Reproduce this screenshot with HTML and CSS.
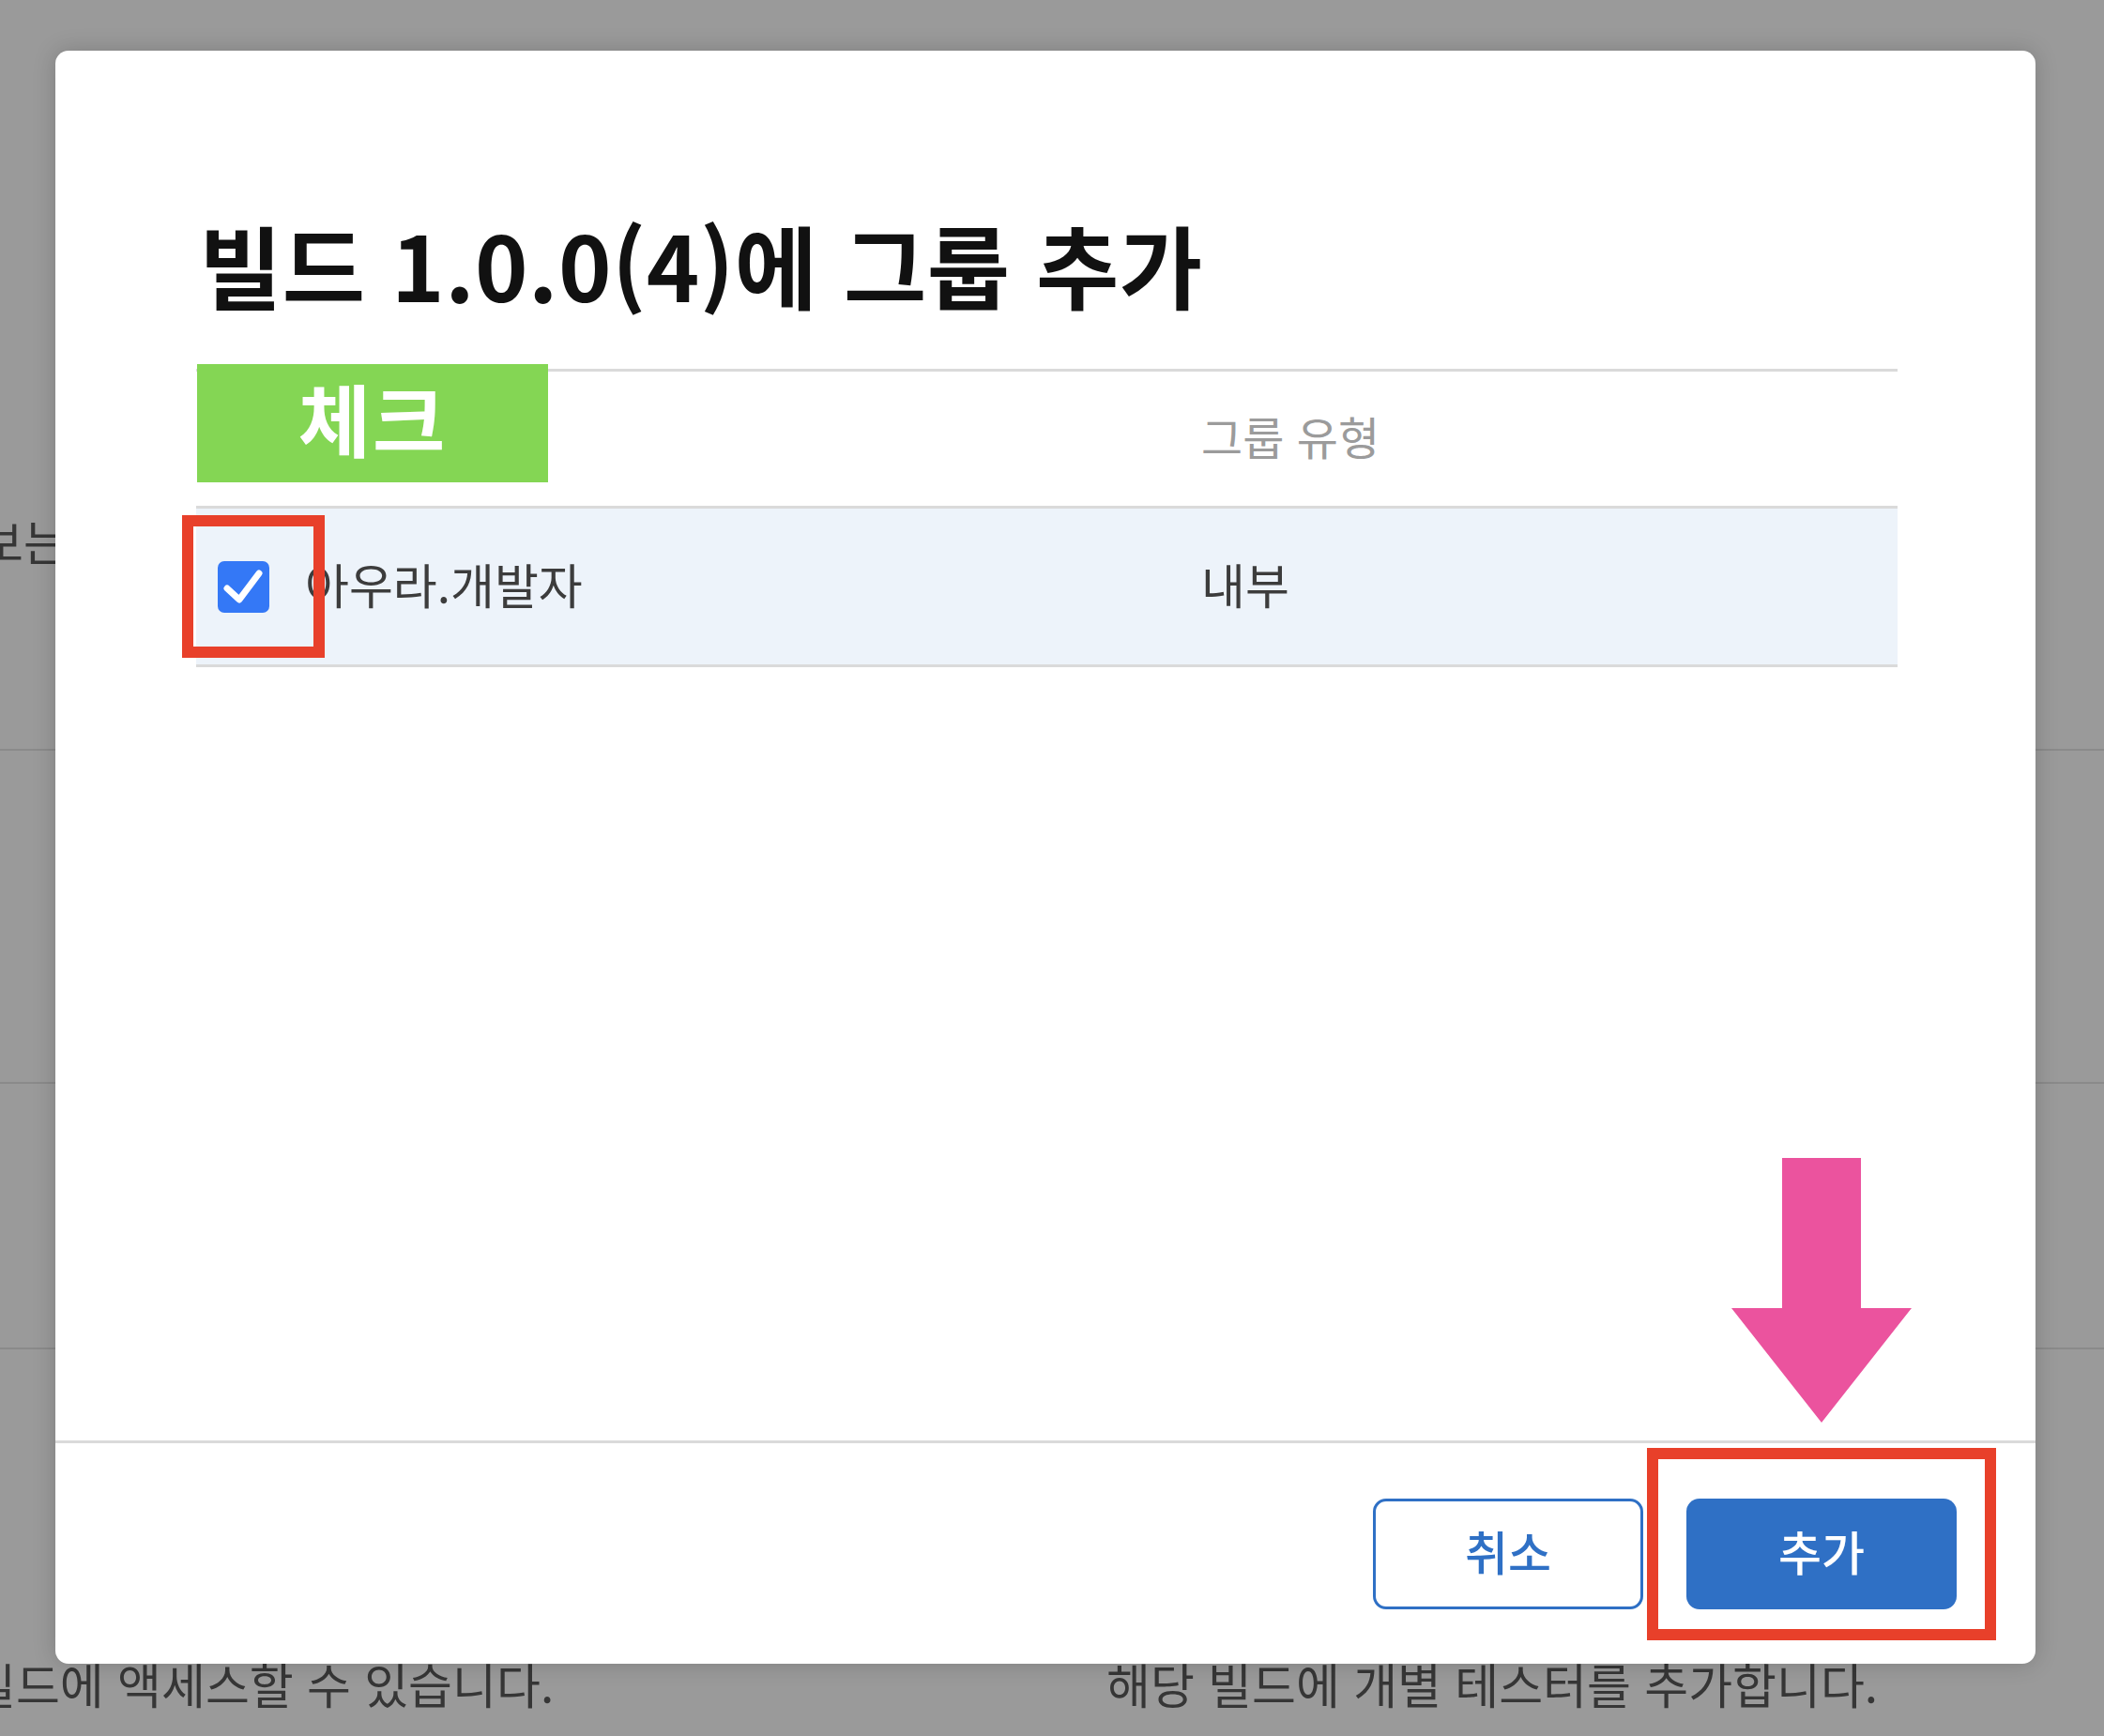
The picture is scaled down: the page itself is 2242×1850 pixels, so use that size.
FILE: index.html
```html
<!DOCTYPE html>
<html lang="ko">
<head>
<meta charset="utf-8">
<title>빌드 1.0.0(4)에 그룹 추가</title>
<link rel="stylesheet" href="styles.css">
</head>
<body>
<div class="page">
  <section class="bg-sec bg-sec1"><p class="bg-text bg-text-left1">보는 테스터 그룹</p></section>
  <section class="bg-sec bg-sec2"></section>
  <section class="bg-sec bg-sec3"></section>
  <section class="bg-sec4">
    <p class="bg-text bg-col-left">빌드에 액세스할 수 있습니다.</p>
    <p class="bg-text bg-col-right">해당 빌드에 개별 테스터를 추가합니다.</p>
  </section>
</div>

<div class="modal">
  <div class="modal-body">
    <h1 class="modal-title">빌드 1.0.0(4)에 그룹 추가</h1>
    <div class="table">
      <div class="tag-check">체크</div>
      <div class="thead">
        <div class="th"></div>
        <div class="th">그룹 유형</div>
      </div>
      <div class="trow">
        <div class="td td-name">
          <span class="cb-wrap">
            <span class="checkbox">
              <svg viewBox="0 0 55 55" width="55" height="55"><path d="M10 29 L23 41 L44 13" fill="none" stroke="#fff" stroke-width="7" stroke-linecap="round" stroke-linejoin="round"/></svg>
            </span>
            <span class="mark-box mark-cb"></span>
          </span>
          <span class="name">아우라.개발자</span>
        </div>
        <div class="td">내부</div>
      </div>
    </div>
  </div>
  <div class="modal-footer">
    <button class="btn btn-cancel">취소</button>
    <span class="btn-wrap">
      <button class="btn btn-add">추가</button>
      <span class="mark-box mark-add"></span>
    </span>
  </div>
  <svg class="arrow" viewBox="0 0 192 282" width="192" height="282"><polygon points="54,0 138,0 138,160 192,160 96,282 0,160 54,160" fill="#eb539e"/></svg>
</div>
</body>
</html>
```

FILE: styles.css
```css
* { box-sizing: border-box; }
html, body {
  margin: 0;
  padding: 0;
}
body {
  width: 2242px;
  height: 1850px;
  overflow: hidden;
  background: #9a9a9a;
  font-family: "Noto Sans CJK KR", "Noto Sans", sans-serif;
  position: relative;
}

/* dimmed page behind */
.page { width: 2242px; }
.bg-sec { border-bottom: 2px solid #8a8a8a; }
.bg-sec1 { height: 800px; padding-top: 544px; }
.bg-sec2 { height: 355px; }
.bg-sec3 { height: 283px; }
.bg-sec4 {
  display: flex;
  padding-top: 324px;
}
.bg-text {
  margin: 0;
  font-size: 51px;
  line-height: 64px;
  color: #363636;
  white-space: nowrap;
}
.bg-text-left1 { margin-left: -22px; }
.bg-col-left { margin-left: -30px; width: 1209px; }

/* modal */
.modal {
  position: absolute;
  left: 59px;
  top: 54px;
  width: 2110px;
  height: 1719px;
  background: #fff;
  border-radius: 14px;
  box-shadow: 0 0 24px rgba(0,0,0,0.18);
  display: flex;
  flex-direction: column;
}
.modal-body {
  flex: 1;
  padding: 169px 147px 0 150px;
}
.modal-title {
  margin: 0 0 0 3px;
  font-size: 96px;
  line-height: 115px;
  font-weight: 700;
  letter-spacing: 0.5px;
  color: #111;
  white-space: nowrap;
}
.table {
  position: relative;
  margin-top: 55px;
  border-top: 3px solid #dadada;
}
.thead, .trow {
  display: grid;
  grid-template-columns: 1071px 1fr;
  align-items: center;
}
.thead {
  height: 146px;
  padding-bottom: 8px;
  border-bottom: 3px solid #dadada;
  font-size: 48px;
  color: #9b9b9b;
}
.trow {
  height: 169px;
  padding-bottom: 6px;
  background: #edf3fa;
  border-bottom: 3px solid #dadada;
  font-size: 51px;
  color: #3c3c3c;
}
.td-name {
  display: flex;
  align-items: center;
  padding-left: 23px;
}
.cb-wrap { position: relative; display: block; width: 55px; height: 55px; margin-top: 6px; }
.checkbox {
  display: block;
  width: 55px;
  height: 55px;
  background: #3478f6;
  border-radius: 7px;
}
.checkbox svg { display: block; }
.name { margin-left: 38px; }

.tag-check {
  position: absolute;
  left: 1px;
  top: -8px;
  width: 374px;
  height: 126px;
  background: #84d654;
  color: #fff;
  font-weight: 700;
  font-size: 84px;
  line-height: 114px;
  text-align: center;
  letter-spacing: 2px;
}

.mark-box {
  position: absolute;
  border: 12px solid #e8402a;
}
.mark-cb { left: -38px; right: -59px; top: -49px; bottom: -48px; }

/* footer */
.modal-footer {
  border-top: 3px solid #dadada;
  padding: 59px 84px 58px 0;
  display: flex;
  justify-content: flex-end;
  gap: 46px;
}
.btn {
  width: 288px;
  height: 118px;
  border-radius: 14px;
  font-family: "Noto Sans CJK KR", "Noto Sans", sans-serif;
  font-size: 50px;
  font-weight: 500;
  padding: 0 0 8px;
  display: block;
}
.btn-cancel {
  background: #fff;
  border: 3px solid #2f70c5;
  color: #2f70c5;
}
.btn-wrap { position: relative; display: block; }
.btn-add {
  background: #2f70c5;
  border: none;
  color: #fff;
}
.mark-add { left: -42px; right: -42px; top: -54px; bottom: -33px; }

.arrow {
  position: absolute;
  left: 1786px;
  top: 1180px;
}
```
